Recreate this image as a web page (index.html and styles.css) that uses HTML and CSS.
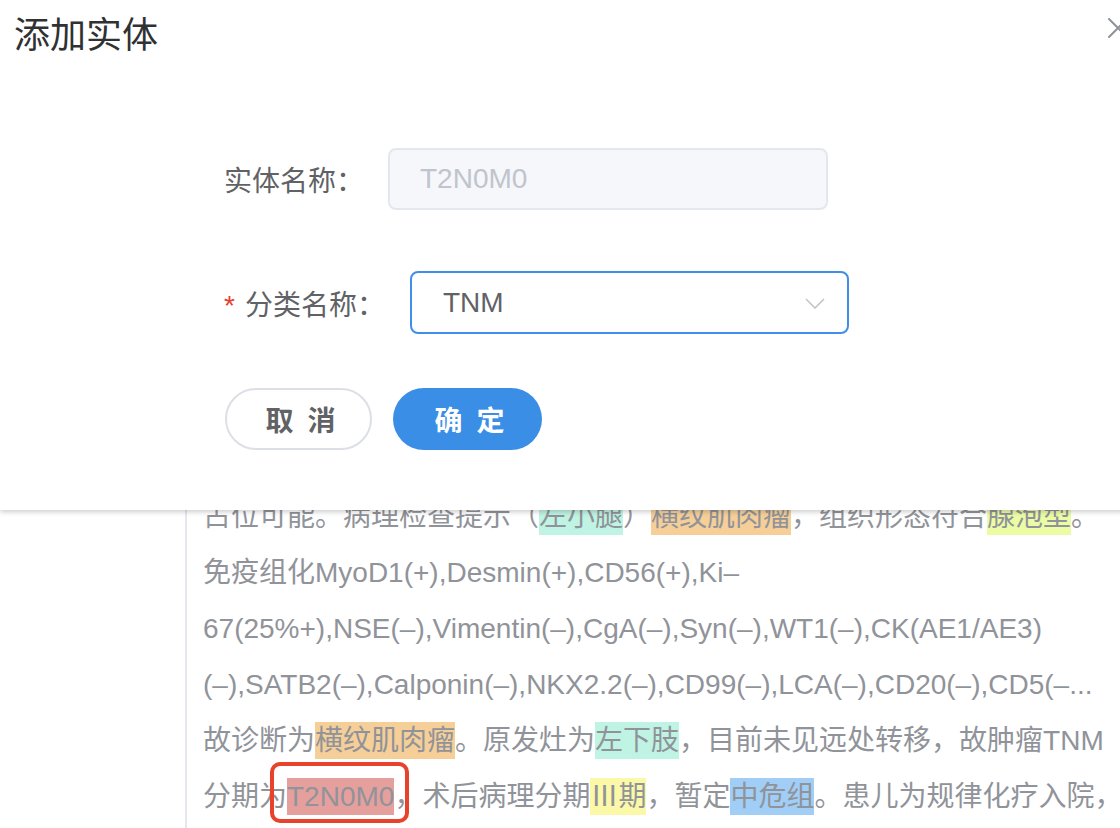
FILE: index.html
```html
<!DOCTYPE html>
<html lang="zh-CN">
<head>
<meta charset="utf-8">
<title>添加实体</title>
<link rel="stylesheet" href="styles.css">
</head>
<body>
<div class="page">
  <aside class="page-side"></aside>
  <main class="record">
    <p class="record-line">占位可能。病理检查提示（<span class="tag tag-teal">左小腿</span>）<span class="tag tag-orange">横纹肌肉瘤</span>，组织形态符合<span class="tag tag-lime">腺泡型</span>。</p>
    <p class="record-line">免疫组化MyoD1(+),Desmin(+),CD56(+),Ki–</p>
    <p class="record-line">67(25%+),NSE(–),Vimentin(–),CgA(–),Syn(–),WT1(–),CK(AE1/AE3)</p>
    <p class="record-line">(–),SATB2(–),Calponin(–),NKX2.2(–),CD99(–),LCA(–),CD20(–),CD5(–...</p>
    <p class="record-line">故诊断为<span class="tag tag-orange">横纹肌肉瘤</span>。原发灶为<span class="tag tag-teal">左下肢</span>，目前未见远处转移，故肿瘤TNM</p>
    <p class="record-line">分期为<span class="tag tag-red tag-marked">T2N0M0</span>，术后病理分期<span class="tag tag-yellow">Ⅲ期</span>，暂定<span class="tag tag-blue">中危组</span>。患儿为规律化疗入院，</p>
  </main>
</div>

<div class="dialog">
  <div class="dialog-header">
    <span class="dialog-title">添加实体</span>
    <button class="dialog-close" type="button" aria-label="关闭">
      <svg width="20" height="20" viewBox="0 0 20 20"><path d="M1 1 L19 19 M19 1 L1 19" stroke="#909399" stroke-width="2" fill="none" stroke-linecap="round"/></svg>
    </button>
  </div>
  <form class="dialog-form">
    <div class="form-row form-row-name">
      <label class="form-label form-label-name">实体名称：</label>
      <div class="input is-disabled">T2N0M0</div>
    </div>
    <div class="form-row form-row-select">
      <label class="form-label form-label-cat"><span class="required">*</span>分类名称：</label>
      <div class="select">
        <span class="select-value">TNM</span>
        <svg class="select-arrow" width="20" height="11" viewBox="0 0 20 11"><polyline points="1,1 10,10 19,1" fill="none" stroke="#c0c4cc" stroke-width="1.6"/></svg>
      </div>
    </div>
    <div class="form-actions">
      <button class="btn btn-cancel" type="button">取 消</button>
      <button class="btn btn-primary" type="button">确 定</button>
    </div>
  </form>
</div>
</body>
</html>
```
FILE: styles.css
```css
* { box-sizing: border-box; }

html, body {
  margin: 0;
  padding: 0;
  width: 1120px;
  height: 828px;
  overflow: hidden;
  background: #fff;
  font-family: "Liberation Sans", "Noto Sans CJK SC", sans-serif;
}

body { position: relative; }

.page {
  display: flex;
  min-height: 828px;
}

.page-side {
  width: 185px;
  flex: none;
}

.record {
  flex: 1;
  border-left: 2px solid #e4e7ed;
  padding: 489px 0 0 16px;
}

.record-line {
  margin: 0;
  white-space: nowrap;
  font-size: 28px;
  line-height: 56px;
  color: #909399;
}

.tag { padding: 3px 0; }
.tag-teal { background: #bff3e3; }
.tag-orange { background: #f6cf98; }
.tag-lime { background: #ebfca5; }
.tag-red { background: #e5a09e; }
.tag-yellow { background: #fbf9a8; }
.tag-blue { background: #a0cef6; }

.tag-marked { position: relative; }
.tag-marked::after {
  content: "";
  position: absolute;
  left: -17px;
  right: -15px;
  top: -16px;
  bottom: -8px;
  border: 4px solid #e8412c;
  border-radius: 10px;
}

/* dialog */
.dialog {
  position: absolute;
  top: 0;
  left: 0;
  width: 1160px;
  height: 510px;
  background: #fff;
  box-shadow: 0 2px 5px rgba(0, 0, 0, 0.2);
  z-index: 10;
}

.dialog-header {
  padding: 12px 0 0 14px;
  height: 60px;
}

.dialog-title {
  font-size: 36px;
  line-height: 48px;
  color: #303133;
}

.dialog-close {
  position: absolute;
  left: 1108px;
  top: 18px;
  width: 20px;
  height: 20px;
  padding: 0;
  border: 0;
  background: transparent;
}
.dialog-close svg { display: block; }

.dialog-form {
  margin: 88px 0 0;
  padding-left: 224px;
}

.form-row {
  display: flex;
  align-items: center;
}

.form-row-name {
  height: 62px;
  margin-bottom: 61px;
}

.form-row-select {
  height: 63px;
  margin-bottom: 54px;
}

.form-label {
  font-size: 28px;
  color: #606266;
  white-space: nowrap;
}
.form-label-name { width: 164px; }
.form-label-cat { width: 186px; }

.required {
  color: #e53e30;
  margin-right: 10px;
}

.input {
  width: 440px;
  height: 62px;
  border: 2px solid #e4e7ed;
  border-radius: 8px;
  background: #f5f7fa;
  padding-left: 30px;
  display: flex;
  align-items: center;
  font-size: 28px;
  color: #c0c4cc;
}

.select {
  width: 439px;
  height: 63px;
  border: 2px solid #3f8ee8;
  border-radius: 8px;
  background: #fff;
  padding: 0 22px 0 31px;
  display: flex;
  align-items: center;
  justify-content: space-between;
  font-size: 28px;
  color: #606266;
}
.select-arrow { display: block; margin-top: 2px; }

.form-actions {
  display: flex;
  gap: 21px;
  padding-left: 1px;
}

.btn {
  height: 62px;
  border-radius: 31px;
  font-family: inherit;
  font-size: 28px;
  font-weight: bold;
  word-spacing: 6px;
  padding: 0 0 0 4px;
  cursor: pointer;
}

.btn-cancel {
  width: 147px;
  border: 2px solid #dcdfe6;
  background: #fff;
  color: #606266;
}

.btn-primary {
  width: 149px;
  border: 0;
  background: #3a8ee6;
  color: #fff;
}
```
